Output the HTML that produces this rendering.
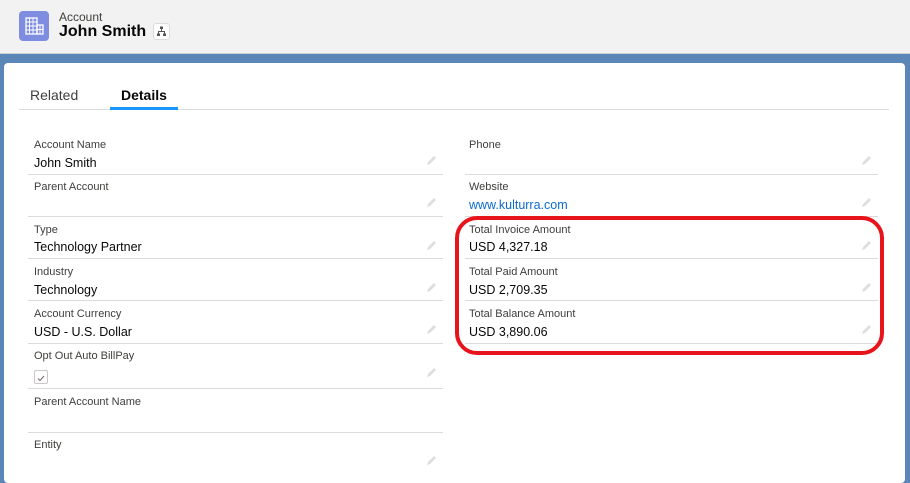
<!DOCTYPE html>
<html><head><meta charset="utf-8"><style>
*{margin:0;padding:0;box-sizing:border-box}
body{width:910px;height:472px;overflow:hidden;background:#5a86b8;font-family:"Liberation Sans",sans-serif;position:relative}
.hdr{position:absolute;left:0;top:0;width:910px;height:54px;background:#f3f2f2;border-bottom:1px solid #d0d0d0}
.ic{position:absolute;left:19px;top:11px;width:30px;height:30px;border-radius:4px;background:#7f8de1}
.card{position:absolute;left:4px;top:63px;width:901px;height:420px;background:#fff;border-radius:4px}
.t{position:absolute;white-space:nowrap}
.lb{font-size:11px;color:#3e3e3c}
.vl{font-size:12.5px;color:#080707}
.ln{position:absolute;height:1px;background:#dddbda}
</style></head><body>
<div class="hdr">
 <div class="ic">
  <svg width="30" height="30" viewBox="0 0 30 30"><rect x="7" y="7" width="11" height="16" fill="none" stroke="#fff" stroke-width="1.3"/><path d="M7 11H18M7 15H18M7 19H18M10.5 7V23M14 7V23" stroke="#fff" stroke-width="0.9"/><rect x="18" y="14" width="6" height="9" fill="none" stroke="#fff" stroke-width="1.3"/><path d="M18 18.5H24M21 14V23" stroke="#fff" stroke-width="0.9"/></svg>
 </div>
 <div class="t" style="left:59px;top:10px;font-size:12px;color:#3e3e3c">Account</div>
 <div class="t" style="left:59px;top:23px;font-size:16px;font-weight:bold;color:#080707">John Smith</div>
 <div style="position:absolute;left:153px;top:23px;width:17px;height:17px;border:1px solid #dddbda;border-radius:3px;background:#fff">
  <svg width="15" height="15" viewBox="0 0 15 15"><path d="M7.5 4V7M4.5 10V7.5H10.5V10" fill="none" stroke="#555" stroke-width="1"/><rect x="6" y="2.5" width="3" height="2.5" fill="#555"/><rect x="3" y="9.5" width="3" height="2.5" fill="#555"/><rect x="9" y="9.5" width="3" height="2.5" fill="#555"/></svg>
 </div>
</div>
<div class="card"></div>
<div class="t" style="left:30px;top:87px;font-size:14px;color:#3e3e3c">Related</div>
<div class="t" style="left:121px;top:87px;font-size:14px;font-weight:bold;color:#080707">Details</div>
<div class="ln" style="left:19px;top:109px;width:870px"></div>
<div style="position:absolute;left:110px;top:107px;width:68px;height:3px;background:#1b96ff"></div>

<div class="t lb" style="left:34px;top:139px">Account Name</div><div class="t vl" style="left:34px;top:156px">John Smith</div><div class="ln" style="left:28px;top:174px;width:415px"></div>
<div class="t lb" style="left:34px;top:181px">Parent Account</div><div class="ln" style="left:28px;top:216px;width:415px"></div>
<div class="t lb" style="left:34px;top:224px">Type</div><div class="t vl" style="left:34px;top:240px">Technology Partner</div><div class="ln" style="left:28px;top:258px;width:415px"></div>
<div class="t lb" style="left:34px;top:266px">Industry</div><div class="t vl" style="left:34px;top:283px">Technology</div><div class="ln" style="left:28px;top:300px;width:415px"></div>
<div class="t lb" style="left:34px;top:308px">Account Currency</div><div class="t vl" style="left:34px;top:325px">USD - U.S. Dollar</div><div class="ln" style="left:28px;top:343px;width:415px"></div>
<div class="t lb" style="left:34px;top:350px">Opt Out Auto BillPay</div>
<div style="position:absolute;left:34px;top:370px;width:14px;height:14px;border:1px solid #c9c7c5;border-radius:2px"><svg width="12" height="12" viewBox="0 0 12 12"><path d="M3 6.5L5 8.5L9 4" fill="none" stroke="#706e6b" stroke-width="1"/></svg></div>
<div class="ln" style="left:28px;top:388px;width:415px"></div>
<div class="t lb" style="left:34px;top:396px">Parent Account Name</div><div class="ln" style="left:28px;top:432px;width:415px"></div>
<div class="t lb" style="left:34px;top:439px">Entity</div>

<div class="t lb" style="left:469px;top:139px">Phone</div><div class="ln" style="left:465px;top:174px;width:413px"></div>
<div class="t lb" style="left:469px;top:181px">Website</div><div class="t vl" style="left:469px;top:198px;color:#0b6bcb">www.kulturra.com</div><div class="ln" style="left:465px;top:216px;width:413px"></div>
<div class="t lb" style="left:469px;top:224px">Total Invoice Amount</div><div class="t vl" style="left:469px;top:240px">USD 4,327.18</div><div class="ln" style="left:465px;top:258px;width:413px"></div>
<div class="t lb" style="left:469px;top:266px">Total Paid Amount</div><div class="t vl" style="left:469px;top:283px">USD 2,709.35</div><div class="ln" style="left:465px;top:300px;width:413px"></div>
<div class="t lb" style="left:469px;top:308px">Total Balance Amount</div><div class="t vl" style="left:469px;top:325px">USD 3,890.06</div><div class="ln" style="left:465px;top:343px;width:413px"></div>

<div style="position:absolute;left:455px;top:216px;width:429px;height:139px;border:4px solid #e8141c;border-radius:22px"></div>

<svg width="910" height="472" style="position:absolute;left:0;top:0">
<defs><g id="p"><path d="M1 11L2 8L8 2L10 4L4 10Z" fill="#dedede"/></g></defs>
<use href="#p" x="426" y="154"/><use href="#p" x="426" y="196"/><use href="#p" x="426" y="239"/><use href="#p" x="426" y="281"/><use href="#p" x="426" y="323"/><use href="#p" x="426" y="366"/><use href="#p" x="426" y="454"/>
<use href="#p" x="861" y="154"/><use href="#p" x="861" y="196"/><use href="#p" x="861" y="239"/><use href="#p" x="861" y="281"/><use href="#p" x="861" y="323"/>
</svg>
</body></html>
